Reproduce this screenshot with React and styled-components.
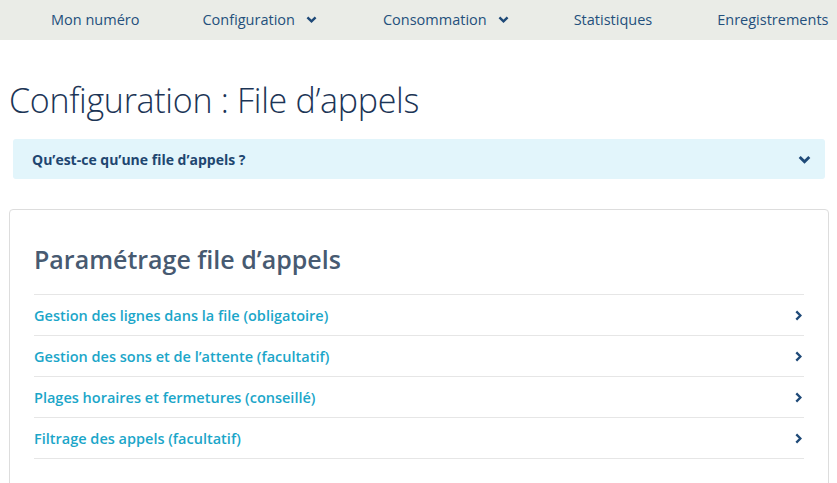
import React from 'react';
import styled, { createGlobalStyle } from 'styled-components';

const Global = createGlobalStyle`
  body {
    margin: 0;
    background: #ffffff;
    font-family: "Open Sans", "Noto Sans", sans-serif;
  }
`;

const NavBar = styled.nav`
  display: flex;
  align-items: center;
  height: 40px;
  padding-bottom: 2px;
  box-sizing: border-box;
  background-color: #eaece7;
  padding-left: 51px;
  white-space: nowrap;
  overflow: hidden;
`;

const NavItem = styled.a`
  display: flex;
  align-items: center;
  gap: 11px;
  margin-right: ${p => p.gap}px;
  font-size: 14.5px;
  color: #24507c;
  text-decoration: none;
`;

const Page = styled.main`
  display: flex;
  flex-direction: column;
  padding: 0 8px 0 9px;
`;

const Title = styled.h1`
  margin: 38px 0 17px;
  font-size: 34px;
  font-weight: 300;
  color: #1c3556;
  letter-spacing: -0.3px;
  line-height: 44px;
`;

const Accordion = styled.div`
  display: flex;
  align-items: center;
  justify-content: space-between;
  height: 40px;
  margin: 0 4px;
  padding: 0 14px 0 19px;
  background-color: #e2f5fb;
  border-radius: 3px;
  font-size: 14px;
  font-weight: 700;
  color: #1e4670;
`;

const Card = styled.section`
  margin-top: 30px;
  padding: 27px 24px 40px;
  border: 1px solid #dddddd;
  border-radius: 4px;
`;

const CardTitle = styled.h2`
  margin: 0 0 13px;
  font-size: 25px;
  font-weight: 600;
  color: #475a71;
  line-height: 44px;
`;

const List = styled.ul`
  list-style: none;
  margin: 0;
  padding: 0;
  border-top: 1px solid #e6e6e6;
`;

const Row = styled.li`
  display: flex;
  align-items: center;
  justify-content: space-between;
  height: 40px;
  padding-right: 0;
  border-bottom: 1px solid #e6e6e6;
  font-size: 14.5px;
  font-weight: 600;
  color: #1ba6c9;
`;

const Chevron = ({ dir = 'down', size = 10, weight = 2 }) => (
  <svg width={size} height={size} viewBox="0 0 10 10">
    <path
      d={dir === 'down' ? 'M1.3 3 L5 6.7 L8.7 3' : 'M3 1.3 L6.7 5 L3 8.7'}
      fill="none"
      stroke="#1f4a78"
      strokeWidth={weight}
    />
  </svg>
);

const navItems = [
  { label: 'Mon numéro', gap: 63 },
  { label: 'Configuration', menu: true, gap: 66 },
  { label: 'Consommation', menu: true, gap: 65 },
  { label: 'Statistiques', gap: 65 },
  { label: 'Enregistrements', gap: 0 },
];

const rows = [
  'Gestion des lignes dans la file (obligatoire)',
  'Gestion des sons et de l’attente (facultatif)',
  'Plages horaires et fermetures (conseillé)',
  'Filtrage des appels (facultatif)',
];

export default function App() {
  return (
    <>
      <Global />
      <NavBar>
        {navItems.map(item => (
          <NavItem key={item.label} href="#" gap={item.gap}>
            {item.label}
            {item.menu && <Chevron size={11} weight={2.2} />}
          </NavItem>
        ))}
      </NavBar>
      <Page>
        <Title>Configuration : File d’appels</Title>
        <Accordion>
          Qu’est-ce qu’une file d’appels ?
          <Chevron size={13} weight={2.2} />
        </Accordion>
        <Card>
          <CardTitle>Paramétrage file d’appels</CardTitle>
          <List>
            {rows.map(r => (
              <Row key={r}>
                {r}
                <Chevron dir="right" size={11} weight={2.1} />
              </Row>
            ))}
          </List>
        </Card>
      </Page>
    </>
  );
}
